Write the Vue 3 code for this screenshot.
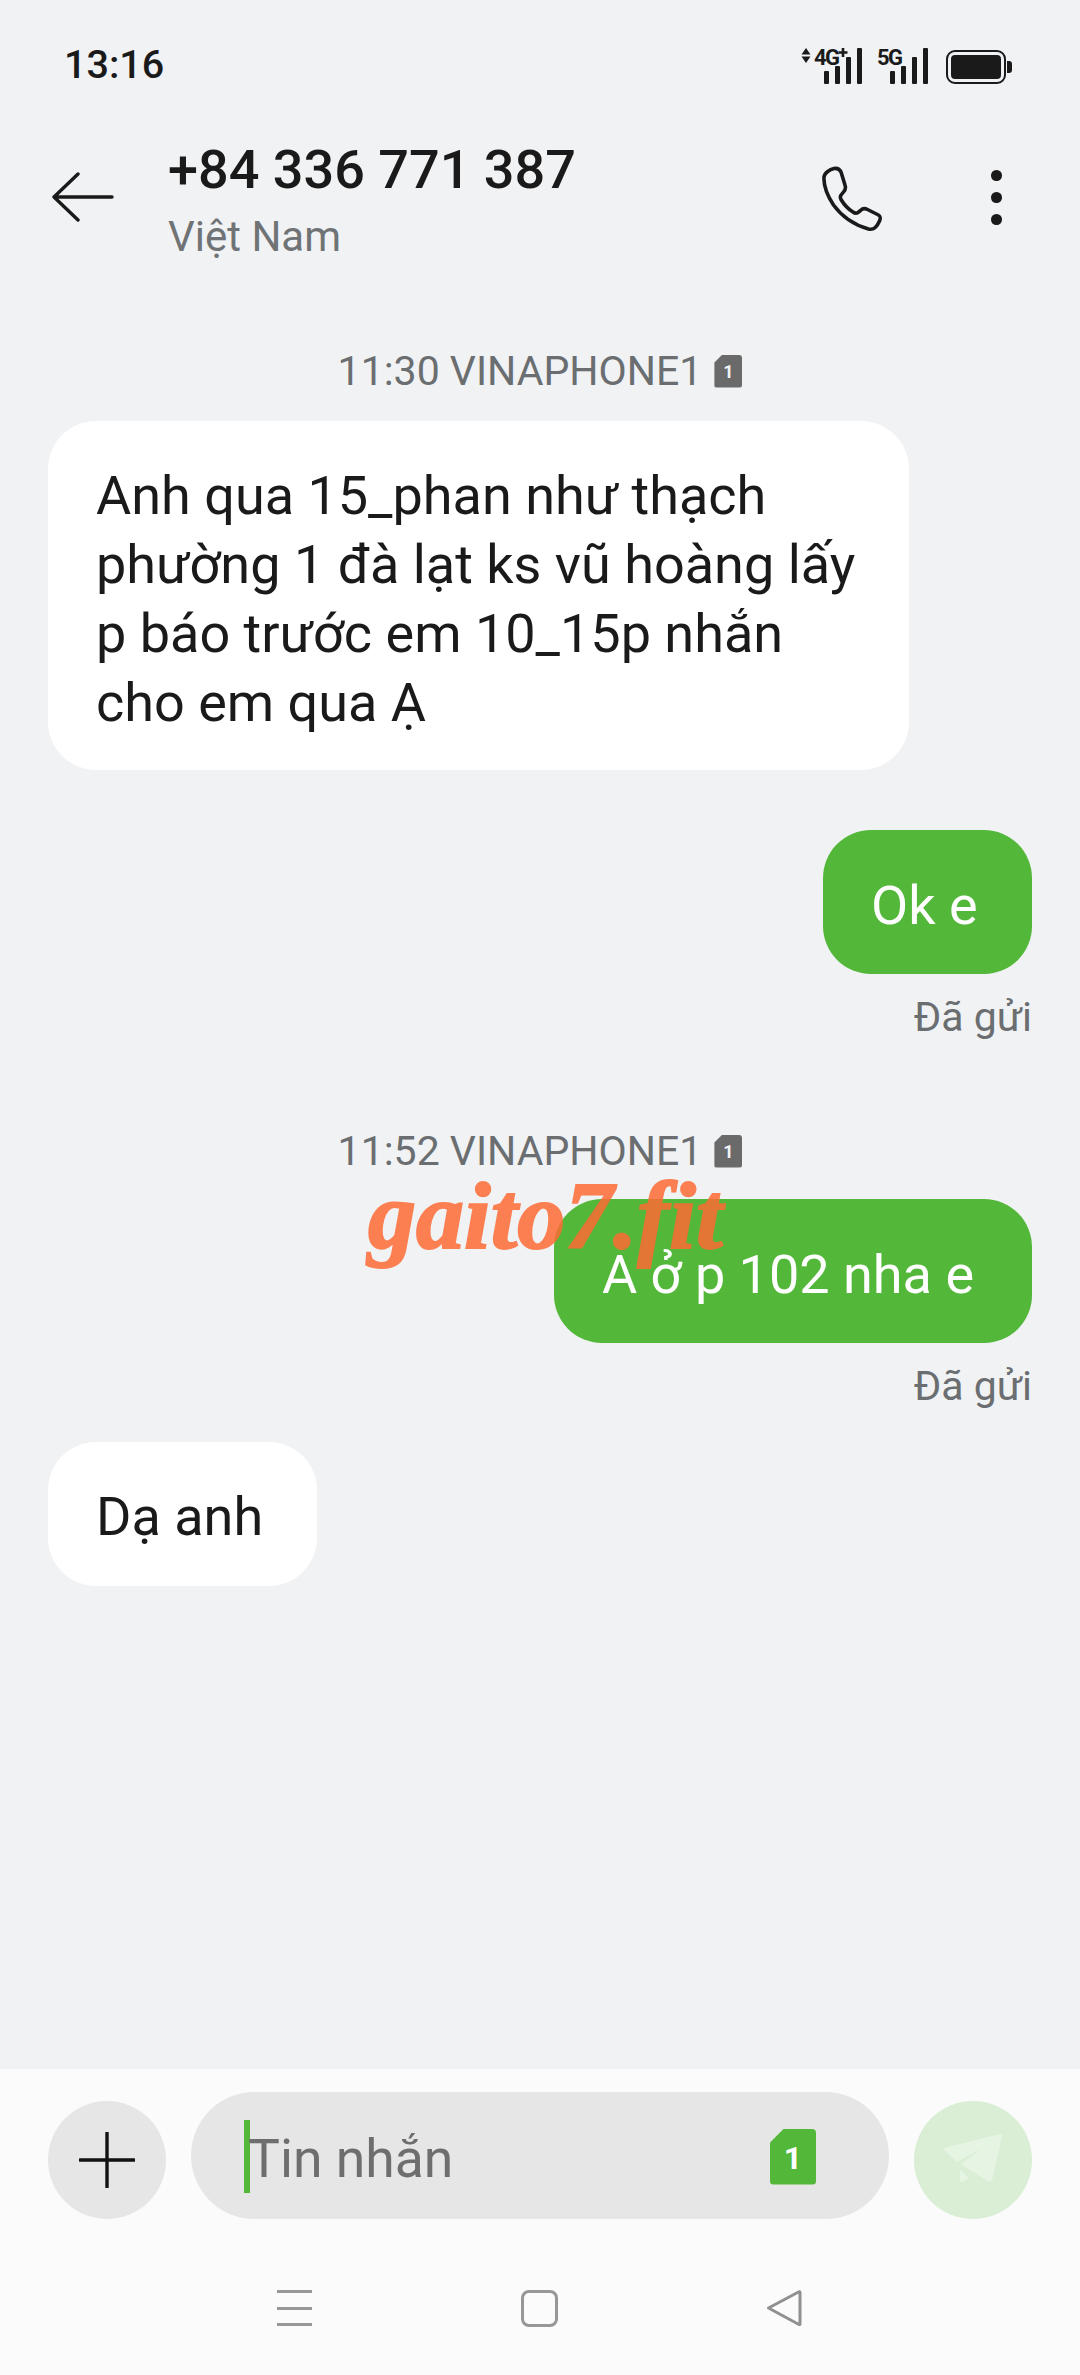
<script setup>
const lines = ['Anh qua 15_phan như thạch', 'phường 1 đà lạt ks vũ hoàng lấy', 'p báo trước em 10_15p nhắn', 'cho em qua Ạ']
</script>

<template>
  <div class="screen">
    <div class="status">
      <span class="clock">13:16</span>
      <div class="status-icons">
        <svg class="net" width="60" height="44" viewBox="0 -6 60 44">
          <path d="M5 0 9.500 6.500H.5ZM5 15 9.500 8.500H.5Z" fill="#1a1a1a" />
          <text x="13" y="17" class="net-label">4G</text>
          <path d="M42 0v9M37.500 4.500h9" stroke="#1a1a1a" stroke-width="2.600" />
        </svg>
        <div class="bars first">
          <i class="b1"></i><i class="b2"></i><i class="b3"></i><i class="b4"></i>
        </div>
        <svg class="net five" width="26" height="44" viewBox="0 -6 26 44">
          <text x="0" y="17" class="net-label">5G</text>
        </svg>
        <div class="bars">
          <i class="b1"></i><i class="b2"></i><i class="b3"></i><i class="b4"></i>
        </div>
        <svg class="battery" width="66" height="36" viewBox="0 0 66 36">
          <rect x="1" y="2" width="58" height="32" rx="8" fill="none" stroke="#1a1a1a" stroke-width="2" />
          <rect x="5" y="6" width="50" height="24" rx="4" fill="#1a1a1a" />
          <path d="M61 12h2a3 3 0 0 1 3 3v6a3 3 0 0 1-3 3h-2Z" fill="#1a1a1a" />
        </svg>
      </div>
    </div>

    <header class="head">
      <svg class="back" width="62" height="50" viewBox="0 0 62 50">
        <path d="M26 2 2 25l24 23M2 25h58" fill="none" stroke="#1a1a1a" stroke-width="3.400" stroke-linecap="round" stroke-linejoin="round" />
      </svg>
      <div class="who">
        <div class="num">+84 336 771 387</div>
        <div class="country">Việt Nam</div>
      </div>
      <svg class="phone" width="64" height="66" viewBox="0 0 64 66">
        <path d="M13 2.500c-4 1-9.500 4-10 8.500-.5 8 3 18 9.500 28 8 11 19 19.500 35 24 5 1 8-1 11-8 1.500-3.500 1-5-2-6.500l-10-5c-3-1.500-5-1-7 1l-2.500 2c-1.500 1-3 1-5-.5-5-3-9-7.500-12-12.500-1-2-1-3.500.5-5l2-2.500c2-2 2.500-4 1.500-7L20 6c-1.300-3-3.500-4.200-7-3.500Z" fill="none" stroke="#1a1a1a" stroke-width="3.600" stroke-linejoin="round" />
      </svg>
      <div class="dots"><i></i><i></i><i></i></div>
    </header>

    <main class="thread">
      <div class="stamp first-stamp">
        <span>11:30 VINAPHONE1</span>
        <span class="sim">1</span>
      </div>
      <div class="bubble in multi">
        <div v-for="line in lines" :key="line">{{ line }}</div>
      </div>
      <div class="bubble out ok">Ok e</div>
      <div class="sent">Đã gửi</div>
      <div class="stamp second-stamp">
        <span>11:52 VINAPHONE1</span>
        <span class="sim">1</span>
      </div>
      <div class="bubble out room">A ở p 102 nha e</div>
      <div class="sent">Đã gửi</div>
      <div class="bubble in reply">Dạ anh</div>
      <div class="mark">gaito7.fit</div>
    </main>

    <footer class="composer">
      <div class="inputs">
        <div class="round plus">
          <svg width="56" height="56" viewBox="0 0 56 56">
            <path d="M28 1v54M1 28h54" stroke="#111" stroke-width="3.400" stroke-linecap="round" />
          </svg>
        </div>
        <div class="field">
          <span class="caret"></span>
          <span class="hint">Tin nhắn</span>
          <span class="sim-green">1</span>
        </div>
        <div class="round send">
          <svg width="60" height="54" viewBox="0 0 60 54">
            <path d="M57 1c1.500 0 2.300 1 2 2.500L49 47c-.4 2-2 2.600-3.500 1.600L17.500 31 40 15 14 29 2 18c-1.500-1.500-1-3 1-3.500Z" fill="#e6f5e3" />
            <path d="M17 37l9 8-7 4c-1 .5-2 0-2-1Z" fill="#e6f5e3" />
          </svg>
        </div>
      </div>
      <nav class="nav">
        <div class="menu"><i></i><i></i><i></i></div>
        <div class="home"></div>
        <svg width="36" height="38" viewBox="0 0 36 38">
          <path d="M33 2.800 2.500 19 33 35.500c.5.300 1 0 1-.6V3.400c0-.6-.5-.9-1-.6Z" fill="none" stroke="#909090" stroke-width="3" stroke-linejoin="round" />
        </svg>
      </nav>
    </footer>
  </div>
</template>

<style>
html, body { margin: 0; background: #f0f2f4; }
</style>

<style scoped>
.screen {
  width: 1080px;
  height: 2375px;
  display: flex;
  flex-direction: column;
  background: #f0f2f4;
  font-family: Roboto, "Noto Sans", sans-serif;
  color: #1a1a1a;
  overflow: hidden;
}
.status {
  height: 130px;
  padding: 0 68px 0 64px;
  display: flex;
  justify-content: space-between;
  align-items: flex-start;
  box-sizing: border-box;
}
.clock {
  margin-top: 43px;
  font-size: 39.500px;
  line-height: 44px;
  font-weight: 500;
}
.status-icons {
  margin-top: 48px;
  display: flex;
  align-items: flex-start;
}
.net-label {
  font-family: Roboto, sans-serif;
  font-size: 22px;
  font-weight: 700;
  fill: #1a1a1a;
  letter-spacing: -1.500px;
}
.net { margin-top: -6px; margin-right: -37px; }
.net.five { margin-left: 15px; margin-right: -13px; }
.bars {
  width: 38px;
  height: 36px;
  display: flex;
  align-items: flex-end;
  justify-content: space-between;
}
.bars i { display: block; width: 5px; background: #1a1a1a; border-radius: 1px; }
.bars .b1 { height: 13px; }
.bars .b2 { height: 18px; }
.bars .b3 { height: 27px; }
.bars .b4 { height: 36px; }
.battery { margin-left: 18px; margin-top: 1px; }

.head {
  height: 125px;
  padding: 0 77px 0 52px;
  display: flex;
  align-items: flex-start;
  box-sizing: border-box;
}
.back { margin-top: 42px; flex: none; }
.who { margin-left: 54px; flex: 1; }
.num {
  font-size: 54px;
  line-height: 62px;
  font-weight: 500;
  color: #1a1a1a;
  margin-top: 9px;
}
.country {
  font-size: 42px;
  line-height: 48px;
  color: #6f7375;
  margin-top: 12px;
}
.phone { margin-top: 36px; flex: none; }
.dots {
  width: 12px;
  margin: 40px 0 0 106px;
  display: flex;
  flex-direction: column;
  gap: 11.500px;
}
.dots i { display: block; width: 10.500px; height: 10.500px; border-radius: 50%; background: #1a1a1a; }

.thread {
  position: relative;
  flex: 1;
  padding: 0 48px;
  display: flex;
  flex-direction: column;
  align-items: flex-start;
}
.stamp {
  align-self: center;
  display: flex;
  align-items: center;
  gap: 12px;
  font-size: 41px;
  line-height: 44px;
  color: #6b6e70;
}
.first-stamp { margin-top: 94px; }
.second-stamp { margin-top: 90px; }
.sim {
  width: 28px;
  height: 33px;
  border-radius: 3px;
  background: #6a6a6a;
  clip-path: polygon(8px 0, 100% 0, 100% 100%, 0 100%, 0 8px);
  color: #f0f2f4;
  font-size: 18px;
  line-height: 33px;
  font-weight: 700;
  text-align: center;
}
.bubble {
  box-sizing: border-box;
  border-radius: 48px;
  font-size: 54px;
  line-height: 69px;
  height: 144px;
  padding: 41px 48px 0;
  white-space: nowrap;
}
.in { background: #fff; color: #1a1a1a; }
.out { background: #53b83a; color: #fff; align-self: flex-end; }
.multi { width: 861px; height: 349px; margin-top: 28px; padding-top: 40px; }
.ok { width: 209px; margin-top: 60px; }
.room { width: 478px; margin-top: 26px; }
.reply { width: 269px; margin-top: 34px; padding-top: 40px; }
.sent {
  align-self: flex-end;
  font-size: 41px;
  line-height: 44px;
  color: #6b6e70;
  margin-top: 21px;
}
.mark {
  position: absolute;
  left: 368px;
  top: 906px;
  font-family: "Liberation Serif", serif;
  font-style: italic;
  font-weight: 700;
  font-size: 96px;
  line-height: 110px;
  color: #ff6a33;
  -webkit-text-stroke: 2px #ff6a33;
  opacity: .84;
  white-space: nowrap;
}

.composer {
  height: 306px;
  background: #fbfbfb;
  box-sizing: border-box;
  padding-top: 23px;
  display: flex;
  flex-direction: column;
}
.inputs {
  height: 127px;
  padding: 0 48px;
  display: flex;
  align-items: flex-end;
  justify-content: space-between;
}
.round {
  width: 118px;
  height: 118px;
  border-radius: 50%;
  display: flex;
  align-items: center;
  justify-content: center;
  flex: none;
}
.plus { background: #e6e6e6; }
.send { background: #d9eed5; }
.field {
  width: 698px;
  height: 127px;
  border-radius: 64px;
  background: #e6e6e6;
  display: flex;
  align-items: center;
  padding: 0 73px 0 53px;
  box-sizing: border-box;
}
.caret { width: 6px; height: 73px; background: #53b83a; margin-top: 2px; flex: none; }
.hint { flex: 1; font-size: 53.500px; line-height: 60px; color: #6e6e6e; margin: 6px 0 0 -2px; }
.sim-green {
  width: 46px;
  height: 56px;
  background: #53b83a;
  border-radius: 4px;
  clip-path: polygon(14px 0, 100% 0, 100% 100%, 0 100%, 0 14px);
  color: #fff;
  font-size: 32px;
  line-height: 58px;
  font-weight: 700;
  text-align: center;
  margin-top: 2px;
}
.nav {
  margin-top: 71px;
  padding: 0 278px 0 277px;
  height: 36px;
  display: flex;
  align-items: center;
  justify-content: space-between;
}
.menu { width: 35px; display: flex; flex-direction: column; gap: 13.500px; }
.menu i { display: block; height: 3px; background: #979797; }
.home { width: 31px; height: 31px; border: 3px solid #979797; border-radius: 8px; }
</style>
